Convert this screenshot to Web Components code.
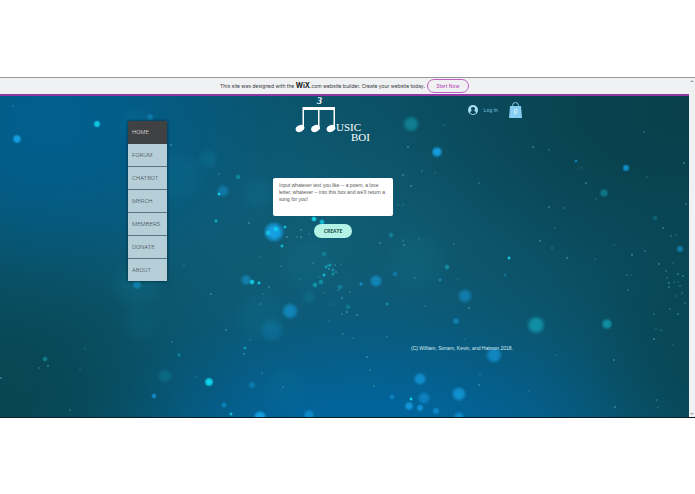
<!DOCTYPE html>
<html lang="en">
<head>
<meta charset="utf-8">
<meta name="viewport" content="width=device-width, initial-scale=1">
<title>Music Boi</title>
<style>
    body {
        margin: 0;
        min-height: 100vh;
        display: flex;
        flex-direction: column;
        justify-content: center;
        background: #fff;
        font-family: "Liberation Sans", Arial, sans-serif;
    }
</style>
</head>
<body>
<browser-view>
    <wix-banner slot="banner"></wix-banner>
    <music-page>
        <side-menu slot="menu">
            <menu-item current>HOME</menu-item>
            <menu-item>FORUM</menu-item>
            <menu-item>CHATBOT</menu-item>
            <menu-item>MERCH</menu-item>
            <menu-item>MEMBERS</menu-item>
            <menu-item>DONATE</menu-item>
            <menu-item>ABOUT</menu-item>
        </side-menu>
        <music-logo slot="header"></music-logo>
        <account-bar slot="header"></account-bar>
        <song-form></song-form>
        <span slot="footer">(C) William, Sonam, Kevin, and Haimon 2018.</span>
    </music-page>
</browser-view>

<script>
// Shared base: clones the element's markup into an open shadow root
class BaseElement extends HTMLElement{
    constructor(){
        super();
        let template = document.createElement('template');
        template.innerHTML = this.markup();
        this.attachShadow({mode: 'open'}).append(template.content.cloneNode(true));
    }
}

class BrowserView extends BaseElement{
    markup(){
        return `
            <style>
                :host {
                    display: grid;
                    grid-template-columns: 1fr 6px;
                    background: #f0f1f2;
                    border-top: 1px solid #999;
                    border-bottom: 1px solid #0b1c24;
                }
                .page {
                    min-width: 0;
                }
                .scrollbar {
                    display: flex;
                    flex-direction: column;
                    justify-content: space-between;
                    align-items: center;
                    padding: 2px 0;
                }
                svg {
                    width: 4px;
                    height: 2px;
                    fill: #aaa;
                }
            </style>
            <div class="page">
                <slot name="banner"></slot>
                <slot></slot>
            </div>
            <div class="scrollbar">
                <svg viewBox="0 0 4 2"><path d="M0 2 2 0 4 2z"/></svg>
                <svg viewBox="0 0 4 2"><path d="M0 0 2 2 4 0z"/></svg>
            </div>
        `
    }
}

class WixBanner extends BaseElement{
    markup(){
        return `
            <style>
                :host {
                    display: flex;
                    justify-content: center;
                    align-items: center;
                    gap: 2px;
                    height: 16px;
                    border-bottom: 2px solid #8f3aa3;
                    color: #35383d;
                    font-family: Inter, sans-serif;
                    font-size: 5px;
                    line-height: 14px;
                    white-space: nowrap;
                }
                b {
                    color: #17191c;
                    font-size: 7px;
                }
                a {
                    box-sizing: border-box;
                    width: 42px;
                    height: 14px;
                    border: 1px solid #c05fc5;
                    border-radius: 7px;
                    color: #b23bb8;
                    line-height: 12px;
                    text-align: center;
                    text-decoration: none;
                }
            </style>
            <span>This site was designed with the <b>WiX</b>.com website builder. Create your website today.</span>
            <a href="#start">Start Now</a>
        `
    }
}

class BokehBackdrop extends BaseElement{
    markup(){
        return `
            <style>
                :host {
                    display: block;
                    overflow: hidden;
                }
                svg {
                    display: block;
                    width: 100%;
                    height: 100%;
                }
            </style>
            <svg viewBox="0 96 689 321" preserveAspectRatio="xMidYMid slice" aria-hidden="true">
                ${this.glows()}
                ${this.dots()}
            </svg>
        `
    }

    // Large soft lights and shadows: x, y, rx, ry, colour, opacity
    glows(){
        let list = [
            [320, 240, 340, 190, '#115f78', .8],
            [50, 120, 290, 220, '#006093', .9],
            [370, 450, 400, 190, '#0068a6', .95],
            [0, 400, 250, 200, '#07444e', .85],
            [689, 110, 400, 240, '#083f4a', 1],
            [709, 340, 170, 220, '#07434e', .8],
        ];
        return list.map(([x, y, rx, ry, color, opacity], i) => `
            <radialGradient id="glow${i}">
                <stop offset="0" stop-color="${color}" stop-opacity="${opacity}"/>
                <stop offset=".25" stop-color="${color}" stop-opacity="${opacity * .85}"/>
                <stop offset=".5" stop-color="${color}" stop-opacity="${opacity * .5}"/>
                <stop offset=".75" stop-color="${color}" stop-opacity="${opacity * .15}"/>
                <stop offset="1" stop-color="${color}" stop-opacity="0"/>
            </radialGradient>
            <ellipse cx="${x}" cy="${y}" rx="${rx}" ry="${ry}" fill="url(#glow${i})"/>`).join('');
    }

    // Lights, grouped by colour: x, y, radius, opacity
    dots(){
        let groups = {
            '#16a3e8': [
                [17, 139, 5, .95], [437, 152, 6, .95], [626, 168, 4, .8], [274, 232, 11, 1], [260, 417, 7, 1],
                [309, 415, 6, .6], [420, 379, 7, .7], [424, 398, 7, .5], [459, 394, 8, .75], [409, 406, 5, .8],
                [420, 408, 4, .7], [436, 411, 4, .6], [459, 417, 6, .6], [392, 397, 3, .5], [376, 281, 7, .6],
                [465, 296, 8, .5], [290, 311, 9, .6], [494, 355, 9, .65], [456, 321, 4, .5],
                [680, 249, 4, .6], [223, 191, 7, .4], [246, 280, 6, .5], [252, 385, 4, .4], [224, 405, 3, .6],
                [137, 285, 5, .5], [272, 330, 13, .2], [576, 161, 2, .6], [440, 280, 2, .6], [505, 275, 2, .4],
                [150, 117, 4, .4], [361, 284, 2, .8], [395, 274, 3, .4], [154, 396, 3, .7],
            ],
            '#12d8f0': [
                [97, 124, 4, .9], [209, 382, 5, 1], [252, 282, 3, .9], [276, 229, 3, .8], [268, 233, 3, .7],
                [314, 219, 3, 1], [322, 222, 3, .8], [219, 194, 2, .9], [411, 399, 2, 1], [509, 258, 2, .9],
                [259, 283, 2, .9], [282, 246, 2, .8], [285, 227, 2, .8], [216, 221, 2, .7], [324, 275, 2, .8],
                [326, 267, 2, .5], [231, 414, 2, .8], [245, 348, 2, .5], [179, 355, 2, .4], [387, 304, 2, .4],
            ],
            '#12a6b8': [
                [411, 124, 9, .55], [536, 325, 10, .75], [607, 324, 6, .75], [604, 193, 5, .5], [655, 218, 3, .3],
                [447, 267, 3, .7], [315, 285, 3, .8], [321, 282, 3, .7], [238, 177, 3, .6], [324, 254, 3, .5],
                [165, 376, 8, .25], [45, 359, 3, .6], [309, 297, 8, .15], [340, 287, 3, .5], [348, 307, 3, .4],
                [391, 235, 3, .5], [208, 159, 11, .15], [330, 265, 2, .9], [333, 270, 2, .7], [333, 274, 2, .8],
                [328, 266, 2, .6],
            ],
            // Far, barely lit discs
            '#1193ac': [
                [257, 192, 20, .12], [178, 177, 28, .12], [136, 125, 18, .14], [137, 285, 28, .14], [260, 315, 28, .1],
                [418, 260, 34, .1], [308, 263, 32, .1], [140, 324, 20, .08], [287, 387, 24, .08],
            ],
        };
        let svg = '';
        for (let [color, list] of Object.entries(groups)) {
            let id = 'dot' + color.slice(1);
            svg += `<radialGradient id="${id}">
                <stop offset="0" stop-color="${color}"/>
                <stop offset=".5" stop-color="${color}" stop-opacity=".9"/>
                <stop offset="1" stop-color="${color}" stop-opacity="0"/>
            </radialGradient>`;
            svg += list.map(([x, y, r, o]) => `<circle cx="${x}" cy="${y}" r="${r}" fill="url(#${id})" opacity="${o}"/>`).join('');
        }
        // Dust specks
        let specks = [
            [13, 106], [171, 145], [219, 174], [184, 265], [211, 294], [262, 373], [250, 340], [226, 330], [172, 342],
            [85, 349], [48, 366], [39, 368], [80, 370], [1, 378], [70, 410], [196, 377], [244, 354], [283, 387],
            [444, 125], [408, 147], [422, 171], [435, 173], [411, 186], [479, 183], [403, 205], [533, 147], [549, 150],
            [581, 168], [586, 183], [644, 132], [647, 177], [684, 163], [686, 204], [596, 199], [549, 207], [564, 208],
            [555, 228], [540, 241], [552, 248], [419, 239], [404, 245], [454, 244], [458, 279], [663, 228], [671, 236],
            [676, 235], [659, 264], [666, 271], [673, 263], [678, 274], [667, 278], [674, 282], [669, 283], [627, 275],
            [631, 275], [632, 255], [645, 251], [595, 259], [567, 258], [628, 290], [614, 245], [683, 276], [680, 286],
            [425, 306], [469, 308], [387, 337], [465, 339], [367, 357], [370, 370], [480, 375], [479, 385], [374, 386],
            [556, 355], [614, 360], [654, 314], [656, 329], [654, 339], [661, 330], [673, 345], [678, 314],
            [685, 303], [529, 391], [615, 407], [657, 400], [658, 407], [301, 237], [297, 237], [309, 234], [287, 237],
            [313, 263], [319, 277], [329, 269], [335, 265], [341, 265], [336, 272], [338, 290], [324, 293], [347, 312],
            [342, 314], [329, 321], [380, 243], [403, 241], [398, 205], [403, 175], [415, 278], [300, 279],
            [269, 287], [261, 304], [263, 294], [301, 230], [281, 266], [260, 257], [249, 223], [670, 309], [678, 282],
            [669, 287], [682, 293], [676, 296], [342, 298], [350, 292], [331, 304], [357, 315], [343, 334], [353, 338],
        ];
        return svg + specks.map(([x, y], i) => `<circle cx="${x}" cy="${y}" r="1" fill="#62c4cf" opacity="${[.2, .45, .3][i % 3]}"/>`).join('');
    }
}

class MusicPage extends BaseElement{
    markup(){
        return `
            <style>
                :host {
                    display: grid;
                    background: #0b5268;
                }
                bokeh-backdrop, .site {
                    grid-area: 1 / 1;
                    min-width: 0;
                    min-height: 0;
                }
                bokeh-backdrop {
                    contain: size;
                }
                .site {
                    box-sizing: border-box;
                    z-index: 1;
                    justify-self: center;
                    display: flex;
                    align-items: flex-start;
                    gap: 106px;
                    width: 100%;
                    max-width: 433px;
                    padding-right: 39px;
                    min-height: 321px;
                }
                nav {
                    padding-top: 25px;
                }
                .content {
                    flex: 1;
                    display: flex;
                    flex-direction: column;
                    align-items: flex-start;
                }
                header {
                    align-self: stretch;
                    display: flex;
                    justify-content: space-between;
                    align-items: flex-start;
                    padding-left: 22px;
                    margin-bottom: 34px;
                }
                footer {
                    align-self: flex-end;
                    margin-top: 106px;
                    padding-right: 9px;
                    color: #dcebf0;
                    font-size: 5px;
                    line-height: 8px;
                    white-space: nowrap;
                }
            </style>
            <bokeh-backdrop></bokeh-backdrop>
            <div class="site">
                <nav><slot name="menu"></slot></nav>
                <div class="content">
                    <header><slot name="header"></slot></header>
                    <main><slot></slot></main>
                    <footer><slot name="footer"></slot></footer>
                </div>
            </div>
        `
    }
}

class SideMenu extends BaseElement{
    markup(){
        return `
            <style>
                :host {
                    display: flex;
                    flex-direction: column;
                    width: 39px;
                    box-shadow: 0 0 3px rgba(0, 0, 0, .6);
                }
            </style>
            <slot></slot>
        `
    }
}

class MenuItem extends BaseElement{
    markup(){
        return `
            <style>
                :host {
                    display: block;
                    background: #b5ced8;
                    border-bottom: 1px solid #587582;
                }
                :host(:last-child) {
                    border-bottom: 0;
                }
                a {
                    display: block;
                    padding-left: 4px;
                    color: #3c474f;
                    font: 300 6px/22px Roboto, sans-serif;
                    text-decoration: none;
                }
                :host([current]) {
                    background: #404143;
                    border-color: #404143;
                }
                :host([current]) a {
                    color: #e0e4e6;
                }
            </style>
            <a href="#"><slot></slot></a>
        `
    }
}

class MusicLogo extends BaseElement{
    markup(){
        return `
            <style>
                :host {
                    display: block;
                }
                svg {
                    display: block;
                    width: 78px;
                    height: 48px;
                    fill: #fff;
                    font-family: "Liberation Serif", serif;
                }
            </style>
            <svg viewBox="0 0 78 48" role="img" aria-label="Music Boi">
                <text x="22" y="8" font-size="10" font-weight="bold" font-style="italic">3</text>
                <path d="M8 11h32v3H8z"/>
                <path d="M7.500 11H9v22H7.500zM23 11h1.500v22H23zM38.500 11H40v22h-1.500z"/>
                <ellipse cx="5" cy="32.500" rx="4.500" ry="3.300" transform="rotate(-25 5 32.500)"/>
                <ellipse cx="20.500" cy="32.500" rx="4.500" ry="3.300" transform="rotate(-25 20.500 32.500)"/>
                <ellipse cx="36" cy="32.500" rx="4.500" ry="3.300" transform="rotate(-25 36 32.500)"/>
                <text x="41" y="35" font-size="11">USIC</text>
                <text x="56" y="45" font-size="11">BOI</text>
            </svg>
        `
    }
}

class AccountBar extends BaseElement{
    markup(){
        return `
            <style>
                :host {
                    display: flex;
                    align-items: center;
                    gap: 11px;
                    padding-top: 6px;
                }
                button, a {
                    display: flex;
                    align-items: center;
                    gap: 5px;
                    padding: 0;
                    border: 0;
                    background: none;
                    color: #7cbfe2;
                    font: 5px/8px Inter, sans-serif;
                }
                .avatar {
                    width: 10px;
                    height: 10px;
                }
                .bag {
                    width: 13px;
                    height: 16px;
                }
            </style>
            <button type="button">
                <svg class="avatar" viewBox="0 0 10 10">
                    <circle cx="5" cy="5" r="5" fill="#a9dcf5"/>
                    <circle cx="5" cy="4" r="2" fill="#0a4657"/>
                    <path d="M2 8c0-3 6-3 6 0-2 1.500-4 1.500-6 0z" fill="#0a4657"/>
                </svg>
                Log In
            </button>
            <a href="#cart" aria-label="Cart, 0 items">
                <svg class="bag" viewBox="0 0 13 16">
                    <path d="M3.500 5V3.500a3 3 0 0 1 6 0V5" fill="none" stroke="#86cdf2"/>
                    <path d="M1 4h11l1 12H0z" fill="#86cdf2"/>
                    <text x="6.500" y="12" text-anchor="middle" font-size="6" fill="#fff">0</text>
                </svg>
            </a>
        `
    }
}

class SongForm extends BaseElement{
    markup(){
        return `
            <style>
                :host {
                    display: block;
                }
                form {
                    display: flex;
                    flex-direction: column;
                    align-items: center;
                    gap: 8px;
                    margin: 0;
                }
                textarea {
                    box-sizing: border-box;
                    display: block;
                    width: 120px;
                    height: 38px;
                    padding: 4px 4px 4px 6px;
                    border: 0;
                    border-radius: 2px;
                    background: #fff;
                    color: #555;
                    font: 5px/7px "Liberation Sans", sans-serif;
                    resize: none;
                    overflow: hidden;
                }
                textarea::placeholder {
                    color: #555;
                }
                button {
                    width: 38px;
                    height: 14px;
                    padding: 0;
                    border: 0;
                    border-radius: 7px;
                    background: #b2f3e6;
                    color: #28504f;
                    font: bold 5px/14px "Open Sans", sans-serif;
                }
            </style>
            <form>
                <textarea aria-label="Song text" placeholder="Input whatever text you like -- a poem, a love letter, whatever -- into this box and we'll return a song for you!"></textarea>
                <button type="button">CREATE</button>
            </form>
        `
    }
}

customElements.define('browser-view', BrowserView)
customElements.define('wix-banner', WixBanner)
customElements.define('bokeh-backdrop', BokehBackdrop)
customElements.define('music-page', MusicPage)
customElements.define('side-menu', SideMenu)
customElements.define('menu-item', MenuItem)
customElements.define('music-logo', MusicLogo)
customElements.define('account-bar', AccountBar)
customElements.define('song-form', SongForm)
</script>
</body>
</html>
